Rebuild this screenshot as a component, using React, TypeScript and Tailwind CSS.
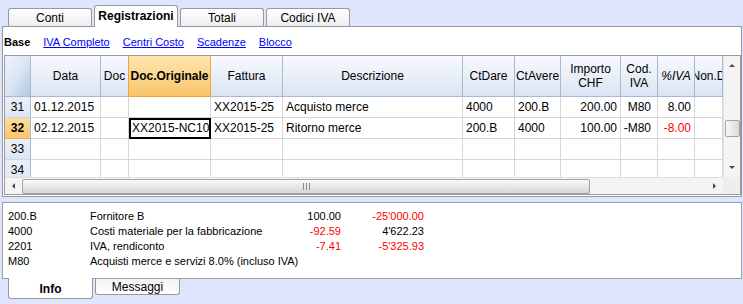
const gridCols =
  "grid grid-cols-[26px_70px_28px_82px_72px_180px_52px_46px_60px_37px_37px_28px]";

const hdr =
  "flex items-center justify-center overflow-hidden whitespace-nowrap border-r border-b border-[#a3bbd6] bg-linear-to-b from-[#f8fafe] to-[#dae4f2] text-center text-[12px] leading-[14px]";

type Cell = { text: string; align?: "l" | "r"; red?: boolean; pr?: string };

const rows: { n: number; selected?: boolean; cells: Cell[] }[] = [
  {
    n: 31,
    cells: [
      { text: "01.12.2015" },
      { text: "" },
      { text: "" },
      { text: "XX2015-25" },
      { text: "Acquisto merce" },
      { text: "4000" },
      { text: "200.B" },
      { text: "200.00", align: "r" },
      { text: "M80", align: "r", pr: "pr-[6px]" },
      { text: "8.00", align: "r" },
      { text: "" },
    ],
  },
  {
    n: 32,
    selected: true,
    cells: [
      { text: "02.12.2015" },
      { text: "" },
      { text: "XX2015-NC10" },
      { text: "XX2015-25" },
      { text: "Ritorno merce" },
      { text: "200.B" },
      { text: "4000" },
      { text: "100.00", align: "r" },
      { text: "-M80", align: "r", pr: "pr-[6px]" },
      { text: "-8.00", align: "r", red: true },
      { text: "" },
    ],
  },
  { n: 33, cells: Array.from({ length: 11 }, () => ({ text: "" })) },
  { n: 34, cells: Array.from({ length: 11 }, () => ({ text: "" })) },
];

const info = [
  { code: "200.B", desc: "Fornitore B", amt: "100.00", bal: "-25'000.00", amtRed: false, balRed: true },
  { code: "4000", desc: "Costi materiale per la fabbricazione", amt: "-92.59", bal: "4'622.23", amtRed: true, balRed: false },
  { code: "2201", desc: "IVA, rendiconto", amt: "-7.41", bal: "-5'325.93", amtRed: true, balRed: true },
  { code: "M80", desc: "Acquisti merce e servizi 8.0% (incluso IVA)", amt: "", bal: "", amtRed: false, balRed: false },
];

const Arrow = ({ dir }: { dir: "up" | "down" | "left" | "right" }) => {
  const pts = {
    up: "1,5 4,2 7,5",
    down: "1,2 4,5 7,2",
    left: "5,1 2,4 5,7",
    right: "2,1 5,4 2,7",
  }[dir];
  return (
    <svg width="8" height="8" viewBox="0 0 8 8">
      <polygon points={pts} fill="#4a4a4a" />
    </svg>
  );
};

const TopTab = ({ label, active }: { label: string; active?: boolean }) =>
  active ? (
    <div className="relative top-px z-10 flex h-[22px] w-[84px] items-center justify-center rounded-t-[3px] border border-b-0 border-[#919b9c] bg-white pb-[1px] text-[12px] font-bold">
      {label}
    </div>
  ) : (
    <div className="flex h-[18px] w-[84px] items-center justify-center rounded-t-[3px] border border-b-0 border-[#919b9c] bg-linear-to-b from-white to-[#eeeef0] pt-[1px] text-[12px]">
      {label}
    </div>
  );

export default function App() {
  return (
    <div className="h-[304px] w-[743px] overflow-hidden bg-[#dee5fc] font-['Liberation_Sans',Arial,sans-serif] text-black">
      {/* top tabs */}
      <div className="flex h-[26px] items-end gap-[2px] pl-[8px]">
        <TopTab label="Conti" />
        <TopTab label="Registrazioni" active />
        <TopTab label="Totali" />
        <TopTab label="Codici IVA" />
      </div>

      {/* main panel */}
      <div className="ml-[2px] h-[171px] w-[740px] border border-[#919b9c] bg-white">
        <div className="flex h-[28px] items-center gap-[13px] pl-[1px] pt-[2px] text-[11px]">
          <span className="font-bold">Base</span>
          <span className="text-[#0000ff] underline">IVA Completo</span>
          <span className="text-[#0000ff] underline">Centri Costo</span>
          <span className="text-[#0000ff] underline">Scadenze</span>
          <span className="text-[#0000ff] underline">Blocco</span>
        </div>

        <div className="ml-px flex h-[140px] w-[737px] flex-col border border-[#9a9a9a]">
          <div className="flex h-[121px]">
            <div className="w-[718px] overflow-hidden">
              {/* header */}
              <div className={`${gridCols} h-[41px]`}>
                <div className="border-r border-b border-[#a3bbd6] bg-linear-to-br from-[#eef3fb] via-[#dbe5f3] to-[#b3c6e2]" />
                <div className={hdr}>Data</div>
                <div className={`${hdr} border-r-[#f2a33c]`}>Doc</div>
                <div className="flex items-center justify-center border-r border-b border-[#f2a33c] bg-linear-to-b from-[#fee6ae] to-[#f8c46a] text-[12px] font-bold">
                  Doc.Originale
                </div>
                <div className={hdr}>Fattura</div>
                <div className={hdr}>Descrizione</div>
                <div className={hdr}>CtDare</div>
                <div className={hdr}>CtAvere</div>
                <div className={hdr}>
                  Importo
                  <br />
                  CHF
                </div>
                <div className={hdr}>
                  Cod.
                  <br />
                  IVA
                </div>
                <div className={`${hdr} italic`}>%IVA</div>
                <div className={hdr}>Non.D</div>
              </div>

              {/* rows */}
              {rows.map((r) => (
                <div key={r.n} className={`${gridCols} h-[21px] text-[12px]`}>
                  <div
                    className={
                      r.selected
                        ? "flex items-center justify-center border-r border-b border-r-[#a3bbd6] border-b-[#f0a848] bg-linear-to-b from-[#fddc98] to-[#f8c770] font-bold"
                        : "flex items-center justify-center border-r border-b border-r-[#a3bbd6] border-b-[#c9d7ea] bg-linear-to-b from-[#eaf0f9] to-[#dde7f4]"
                    }
                  >
                    {r.n}
                  </div>
                  {r.cells.map((c, i) => {
                    const sel = r.selected && i === 2;
                    return (
                      <div
                        key={i}
                        className={`flex items-center overflow-hidden whitespace-nowrap border-r border-b border-[#d6d6d6] ${
                          c.align === "r" ? `justify-end ${c.pr ?? "pr-[3px]"}` : "pl-[3px]"
                        } ${c.red ? "text-[#ff0000]" : ""} ${
                          sel ? "pl-[2px] outline-2 -outline-offset-2 outline-black" : ""
                        }`}
                      >
                        {c.text}
                      </div>
                    );
                  })}
                </div>
              ))}
            </div>

            {/* vertical scrollbar */}
            <div className="flex w-[17px] flex-col items-center border-l border-[#e2e2e2] bg-[#f4f4f4]">
              <div className="flex h-[17px] items-center justify-center pt-[3px]">
                <Arrow dir="up" />
              </div>
              <div className="h-[47px]" />
              <div className="h-[17px] w-[15px] rounded-[2px] border border-[#a2a2a2] bg-linear-to-r from-[#f7f7f7] to-[#dadada]" />
              <div className="flex-1" />
              <div className="flex h-[17px] items-center justify-center pb-[1px]">
                <Arrow dir="down" />
              </div>
            </div>
          </div>

          {/* horizontal scrollbar */}
          <div className="flex h-[17px]">
            <div className="flex w-[718px] items-center border-t border-[#dedede] bg-[#f4f4f4]">
              <div className="flex w-[17px] justify-center">
                <Arrow dir="left" />
              </div>
              <div className="flex h-[15px] w-[568px] items-center justify-center rounded-[2px] border border-[#a2a2a2] bg-linear-to-b from-[#f9f9f9] to-[#d6d6d6]">
                <div className="flex gap-[2px]">
                  <div className="h-[7px] w-px bg-[#8a8a8a]" />
                  <div className="h-[7px] w-px bg-[#8a8a8a]" />
                  <div className="h-[7px] w-px bg-[#8a8a8a]" />
                </div>
              </div>
              <div className="flex-1" />
              <div className="flex w-[17px] justify-center">
                <Arrow dir="right" />
              </div>
            </div>
            <div className="w-[17px] bg-[#eeeeee]" />
          </div>
        </div>
      </div>

      {/* info panel */}
      <div className="ml-[2px] mt-[5px] h-[77px] w-[740px] border border-[#a0a0a0] bg-white pl-[5px] pt-[6px] text-[11px] leading-[15px]">
        {info.map((r) => (
          <div key={r.code} className="grid grid-cols-[82px_190px_61px_83px]">
            <span>{r.code}</span>
            <span className="whitespace-nowrap">{r.desc}</span>
            <span className={`text-right ${r.amtRed ? "text-[#ff0000]" : ""}`}>{r.amt}</span>
            <span className={`text-right ${r.balRed ? "text-[#ff0000]" : ""}`}>{r.bal}</span>
          </div>
        ))}
      </div>

      {/* bottom tabs */}
      <div className="-mt-px flex items-start gap-[2px] pl-[8px]">
        <div className="flex h-[21px] w-[85px] items-center justify-center rounded-b-[3px] border border-t-0 border-[#919b9c] bg-white pt-[2px] text-[12px] font-bold">
          Info
        </div>
        <div className="mt-px flex h-[16px] w-[85px] items-center justify-center rounded-b-[3px] border border-t-0 border-[#919b9c] bg-linear-to-b from-[#f2f2f2] to-white text-[12px]">
          Messaggi
        </div>
      </div>
    </div>
  );
}
